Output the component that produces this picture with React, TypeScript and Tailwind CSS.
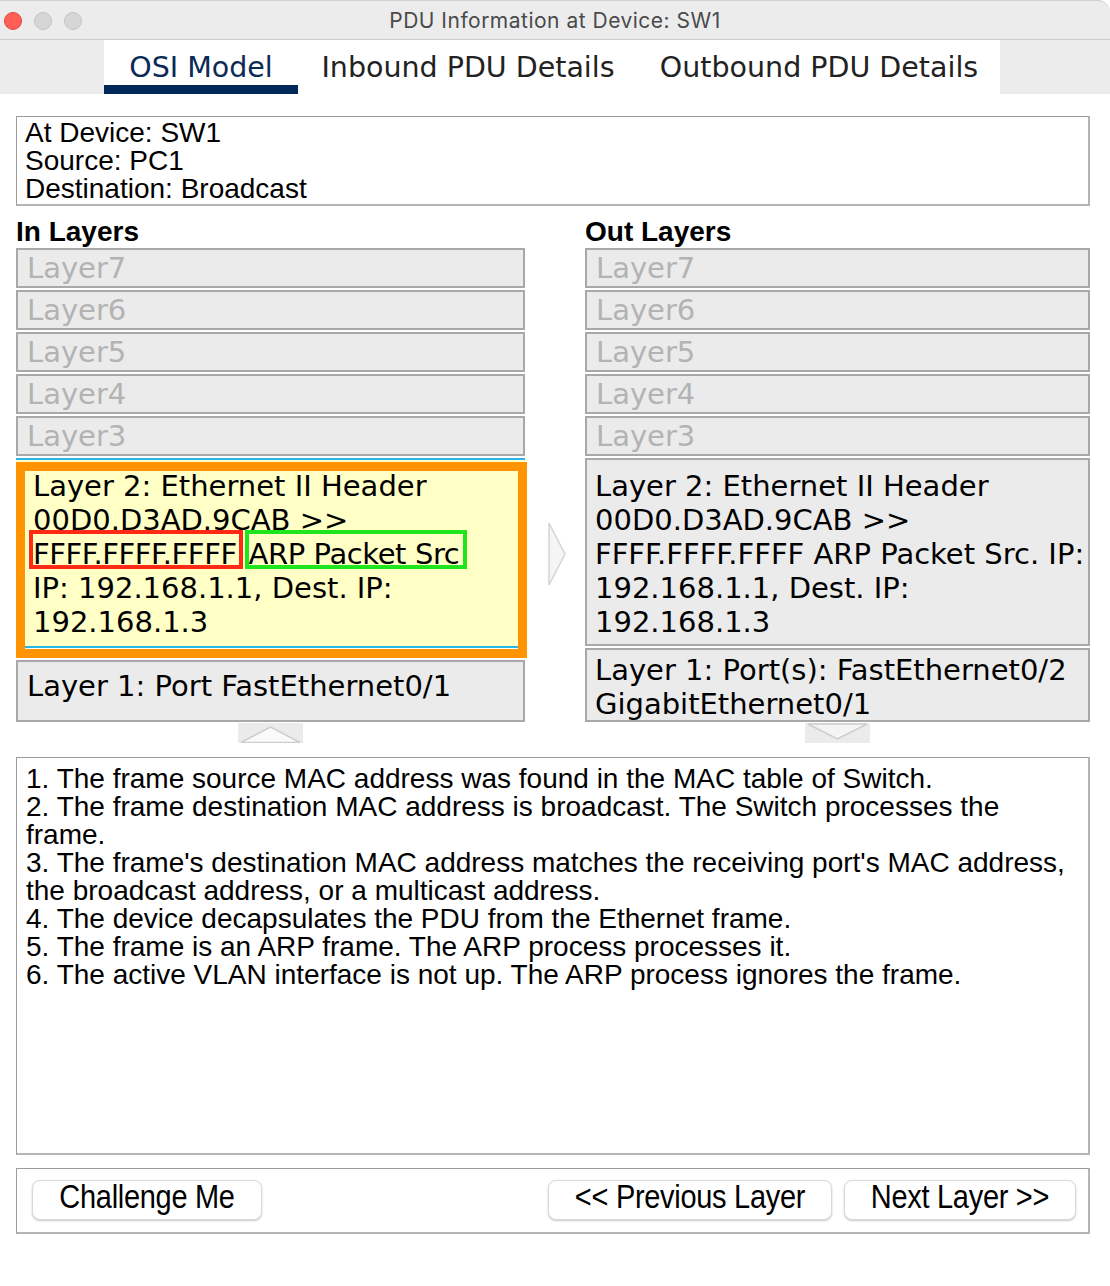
import React from "react";

const DV = "font-['DejaVu_Sans',sans-serif]";
const LS = "font-['Liberation_Sans',Arial,sans-serif]";

function GrayLayer({ label }: { label: string }) {
  return (
    <div
      className={`h-[40px] bg-[#ebebeb] border-2 border-[#a8a8a8] pl-[9px] pt-[1px] text-[29px] leading-[34px] text-[#b3b3b3] whitespace-nowrap ${DV}`}
    >
      {label}
    </div>
  );
}

function Tab({ label, active, w }: { label: string; active?: boolean; w: string }) {
  return (
    <div className={`flex flex-col h-full ${w}`}>
      <div
        className={`flex-1 flex items-center justify-center pt-[11px] text-[28.5px] leading-[34px] whitespace-nowrap ${DV} ${
          active ? "text-[#0b2a55]" : "text-[#222222]"
        }`}
      >
        {label}
      </div>
      <div className={`h-[9px] ${active ? "bg-[#00285a]" : "bg-transparent"}`} />
    </div>
  );
}

function Btn({ label, w }: { label: string; w: string }) {
  return (
    <div
      className={`${w} h-[40px] bg-white border border-[#d9d9d9] rounded-[8px] shadow-[0_1px_2px_rgba(0,0,0,0.22)] flex items-center justify-center text-[29px] text-black whitespace-nowrap ${LS}`}
    >
      <span className="inline-block scale-y-[1.12] tracking-[-0.3px] -translate-y-[2px]">{label}</span>
    </div>
  );
}

export default function App() {
  const layers = ["Layer7", "Layer6", "Layer5", "Layer4", "Layer3"];
  const desc = [
    "1. The frame source MAC address was found in the MAC table of Switch.",
    "2. The frame destination MAC address is broadcast. The Switch processes the",
    "frame.",
    "3. The frame's destination MAC address matches the receiving port's MAC address,",
    "the broadcast address, or a multicast address.",
    "4. The device decapsulates the PDU from the Ethernet frame.",
    "5. The frame is an ARP frame. The ARP process processes it.",
    "6. The active VLAN interface is not up. The ARP process ignores the frame.",
  ];
  return (
    <div className="w-[1110px] h-[1286px] bg-white overflow-hidden">
      {/* Title bar */}
      <div className="h-[40px] bg-[#ececec] border-t border-[#cfcfcf] border-b border-b-[#cdcdcd] rounded-tr-[12px] relative flex items-center justify-center">
        <div className="absolute left-[4px] top-[11px] flex gap-[12px]">
          <div className="w-[18px] h-[18px] rounded-full bg-[#ff5f57] border border-[#e0443e]" />
          <div className="w-[18px] h-[18px] rounded-full bg-[#d6d6d6] border border-[#c4c4c4]" />
          <div className="w-[18px] h-[18px] rounded-full bg-[#d6d6d6] border border-[#c4c4c4]" />
        </div>
        <div className="text-[21px] tracking-[0.5px] text-[#4a4a4a] font-['Inter',sans-serif] pt-[1px]">
          PDU Information at Device: SW1
        </div>
      </div>

      {/* Tabs */}
      <div className="h-[54px] bg-[#ececec] flex">
        <div className="ml-[104px] w-[896px] bg-white flex h-full">
          <Tab label="OSI Model" active w="w-[194px]" />
          <Tab label="Inbound PDU Details" w="w-[340px]" />
          <Tab label="Outbound PDU Details" w="w-[362px]" />
        </div>
      </div>

      {/* Content */}
      <div className="pl-[16px] pr-[20px] pt-[22px]">
        {/* Info box */}
        <div
          className={`h-[90px] border-t border-l border-[#9c9c9c] border-r-2 border-b-2 border-r-[#b5b5b5] border-b-[#b5b5b5] pl-[8px] pt-[2px] text-[28px] leading-[28px] text-black ${LS}`}
        >
          <div>At Device: SW1</div>
          <div>Source: PC1</div>
          <div>Destination: Broadcast</div>
        </div>

        {/* Columns */}
        <div className="flex mt-[12px]">
          {/* In layers */}
          <div className="w-[509px] flex flex-col">
            <div className={`h-[28px] leading-[28px] text-[28px] font-bold text-black mb-[2px] ${LS}`}>
              In Layers
            </div>
            <div className="flex flex-col gap-[2px]">
              {layers.map((l) => (
                <GrayLayer key={l} label={l} />
              ))}
              <div className="relative h-[200px]">
                <div
                  className={`h-[190px] bg-[#ffffc6] border-t-2 border-b-2 border-[#2ab6e6] pl-[17px] pt-[9px] text-[29px] leading-[34px] text-black whitespace-nowrap ${DV}`}
                >
                  <div>Layer 2: Ethernet II Header</div>
                  <div>00D0.D3AD.9CAB &gt;&gt;</div>
                  <div className="tracking-[-0.4px]">
                    <span className="relative">
                      FFFF.FFFF.FFFF
                      <span className="absolute left-[-4px] right-[-6px] top-[-7px] bottom-[2px] border-[4px] border-[#ff2a14]" />
                    </span>{" "}
                    <span className="relative ml-[3px]">
                      ARP Packet Src
                      <span className="absolute left-[-4px] right-[-8px] top-[-7px] bottom-[2px] border-[4px] border-[#1ee61e]" />
                    </span>
                  </div>
                  <div>IP: 192.168.1.1, Dest. IP:</div>
                  <div>192.168.1.3</div>
                </div>
                <div className="absolute top-[4px] left-0 right-[-2px] bottom-0 border-[9px] border-[#ff9400]" />
              </div>
              <div
                className={`h-[62px] bg-[#ebebeb] border-2 border-[#a8a8a8] pl-[9px] pt-[7px] text-[29px] leading-[34px] text-black whitespace-nowrap ${DV}`}
              >
                Layer 1: Port FastEthernet0/1
              </div>
            </div>
          </div>

          {/* middle arrow */}
          <div className="w-[60px] pt-[304px] pl-[23px]">
            <svg width="20" height="66" viewBox="0 0 20 66">
              <polygon points="1,1 17,32 1,63" fill="#f5f5f5" stroke="#d4d4d4" strokeWidth="1.5" />
            </svg>
          </div>

          {/* Out layers */}
          <div className="w-[505px] flex flex-col">
            <div className={`h-[28px] leading-[28px] text-[28px] font-bold text-black mb-[2px] ${LS}`}>
              Out Layers
            </div>
            <div className="flex flex-col gap-[2px]">
              {layers.map((l) => (
                <GrayLayer key={l} label={l} />
              ))}
              <div
                className={`h-[188px] bg-[#ebebeb] border-2 border-[#a8a8a8] pl-[8px] pt-[9px] text-[29px] leading-[34px] text-black whitespace-nowrap ${DV}`}
              >
                <div>Layer 2: Ethernet II Header</div>
                <div>00D0.D3AD.9CAB &gt;&gt;</div>
                <div>FFFF.FFFF.FFFF ARP Packet Src. IP:</div>
                <div>192.168.1.1, Dest. IP:</div>
                <div>192.168.1.3</div>
              </div>
              <div
                className={`h-[74px] bg-[#ebebeb] border-2 border-[#a8a8a8] pl-[8px] pt-[3px] text-[29px] leading-[34px] text-black whitespace-nowrap ${DV}`}
              >
                <div>Layer 1: Port(s): FastEthernet0/2</div>
                <div>GigabitEthernet0/1</div>
              </div>
            </div>
          </div>
        </div>

        {/* scroll chevrons */}
        <div className="flex mt-[1px]">
          <div className="w-[509px] flex justify-center">
            <svg width="65" height="20" viewBox="0 0 65 20">
              <rect x="0" y="0" width="65" height="20" fill="#ebebeb" />
              <polygon points="3,19.5 32.5,4 62,19.5" fill="#fafafa" stroke="#cdcdcd" strokeWidth="1.5" />
            </svg>
          </div>
          <div className="w-[60px]" />
          <div className="w-[505px] flex justify-center">
            <svg width="65" height="20" viewBox="0 0 65 20">
              <rect x="0" y="0" width="65" height="20" fill="#ebebeb" />
              <polygon points="3,1 32.5,16 62,1" fill="#f4f4f4" stroke="#cdcdcd" strokeWidth="1.5" />
            </svg>
          </div>
        </div>

        {/* Description */}
        <div
          className={`mt-[14px] h-[398px] border-t border-l border-[#9c9c9c] border-r-2 border-b-2 border-r-[#b5b5b5] border-b-[#b5b5b5] pl-[9px] pt-[7px] text-[28px] leading-[28px] text-black whitespace-nowrap overflow-hidden ${LS}`}
        >
          {desc.map((d, i) => (
            <div key={i}>{d}</div>
          ))}
        </div>

        {/* Buttons panel */}
        <div className="mt-[13px] h-[66px] border-t border-l border-[#9c9c9c] border-r-2 border-b-2 border-r-[#b5b5b5] border-b-[#b5b5b5] pl-[15px] pr-[12px] pt-[11px] flex items-start justify-between">
          <Btn label="Challenge Me" w="w-[230px]" />
          <div className="flex gap-[12px]">
            <Btn label="<< Previous Layer" w="w-[284px]" />
            <Btn label="Next Layer >>" w="w-[232px]" />
          </div>
        </div>
      </div>
    </div>
  );
}
